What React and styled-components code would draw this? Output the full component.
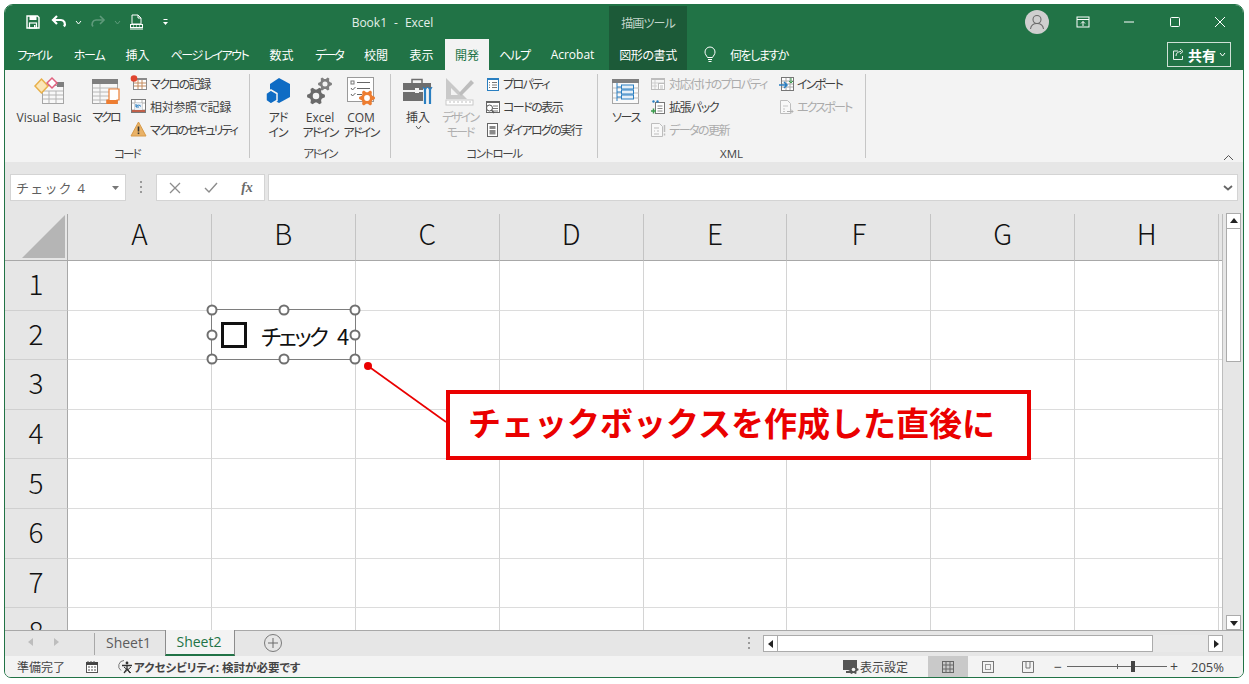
import React from "react";
import styled, { createGlobalStyle } from "styled-components";

const FONT = `"Open Sans","Noto Sans CJK JP",sans-serif`;
const GREEN = "#217346";
const DARK = "#1c5a38";
const RED = "#ea0000";

const Global = createGlobalStyle`
  html, body { margin: 0; background: #fff; }
  #root { width: 1249px; height: 684px; }
  * { box-sizing: border-box; }
  svg { flex: none; }
`;

const Page = styled.div`
  position: relative;
  width: 1249px;
  height: 684px;
  padding: 4px 5px 6px 4px;
  overflow: hidden;
  font-family: ${FONT};
  font-feature-settings: "palt";
  background: #fff;
`;
const Window = styled.div`
  height: 674px;
  display: flex;
  flex-direction: column;
  border: 1px solid ${GREEN};
  border-radius: 9px 9px 7px 7px;
  overflow: hidden;
  background: #f3f3f3;
`;
const Kana = styled.span`
  letter-spacing: ${(p) => p.$ls ?? -1.7}px;
`;

/* title bar */
const TitleBar = styled.div`
  height: 34px;
  display: flex;
  align-items: stretch;
  background: ${GREEN};
  color: #fff;
  flex: none;
  padding-left: 17px;
`;
const Slot = styled.div`
  width: ${(p) => p.$w}px;
  display: flex;
  align-items: center;
  justify-content: center;
  flex: none;
`;
const DocTitle = styled.div`
  width: 433px;
  flex: none;
  display: flex;
  align-items: center;
  justify-content: center;
  gap: 7px;
  font-size: 12px;
  color: #e4efe9;
`;
const ContextHead = styled.div`
  width: 78px;
  flex: none;
  margin-top: 1px;
  background: ${DARK};
  display: flex;
  align-items: center;
  justify-content: center;
  font-size: 12px;
  letter-spacing: -0.9px;
  color: #c2d5ca;
`;
const TitleRight = styled.div`
  flex: 1;
  display: flex;
  justify-content: flex-end;
  align-items: center;
`;
const Avatar = styled.div`
  width: 24px;
  height: 24px;
  border-radius: 50%;
  background: #cfcfcf;
  margin-right: 11px;
  display: flex;
  align-items: center;
  justify-content: center;
`;

/* tabs */
const TabBar = styled.div`
  height: 31px;
  flex: none;
  display: flex;
  background: ${GREEN};
  padding-right: 12px;
`;
const Tab = styled.div`
  width: ${(p) => p.$w}px;
  flex: none;
  display: flex;
  align-items: center;
  justify-content: center;
  font-size: 12px;
  letter-spacing: ${(p) => p.$ls || 0}px;
  color: ${(p) => (p.$active ? GREEN : "#fff")};
  background: ${(p) => (p.$active ? "#f3f3f3" : p.$context ? DARK : "transparent")};
  margin-left: ${(p) => p.$gap || 0}px;
`;
const Search = styled.div`
  display: flex;
  align-items: center;
  gap: 13px;
  margin-left: 16px;
  font-size: 12px;
  letter-spacing: -1.5px;
  color: #fff;
`;
const Share = styled.div`
  margin: 3px 0 3px auto;
  width: 64px;
  border: 1px solid #cfe0d6;
  display: flex;
  align-items: center;
  justify-content: center;
  gap: 3px;
  color: #fff;
  font-size: 14px;
  font-weight: 700;
`;

/* ribbon */
const Ribbon = styled.div`
  position: relative;
  height: 92px;
  flex: none;
  display: flex;
  background: #f3f3f3;
  color: #3f3f3f;
  font-size: 12px;
`;
const Group = styled.div`
  width: ${(p) => p.$w}px;
  flex: none;
  display: flex;
  flex-direction: column;
`;
const GroupBody = styled.div`
  height: 75px;
  display: flex;
  padding: 3px 0 0 ${(p) => p.$pad || 0}px;
`;
const GroupLabel = styled.div`
  height: 17px;
  line-height: 17px;
  text-align: center;
  font-size: 11.5px;
  letter-spacing: ${(p) => p.$ls ?? -1.4}px;
  color: #444;
`;
const Divider = styled.div`
  width: 1px;
  margin: 4px 0;
  flex: none;
  background: #c6c6c6;
`;
const Big = styled.div`
  width: ${(p) => p.$w}px;
  flex: none;
  display: flex;
  flex-direction: column;
  align-items: center;
  text-align: center;
  line-height: 15px;
  white-space: nowrap;
  color: ${(p) => (p.$off ? "#b0b0b0" : "#3f3f3f")};
`;
const BigIcon = styled.div`
  height: 36px;
  display: flex;
  align-items: center;
  justify-content: center;
  margin-bottom: 1px;
`;
const Small = styled.div`
  height: 23px;
  display: flex;
  align-items: center;
  gap: 3px;
  white-space: nowrap;
  letter-spacing: ${(p) => p.$ls ?? -1.5}px;
  color: ${(p) => (p.$off ? "#ababab" : "#3f3f3f")};
`;
const SmallCol = styled.div`
  width: ${(p) => p.$w}px;
  flex: none;
  margin-top: -1px;
  margin-left: ${(p) => p.$ml || 0}px;
`;
const Collapse = styled.div`
  position: absolute;
  right: 9px;
  bottom: 1px;
  line-height: 0;
`;

/* formula bar */
const FormulaBar = styled.div`
  height: 40px;
  flex: none;
  display: flex;
  align-items: flex-start;
  padding: 12px 5px 0 5px;
  background: #e6e6e6;
`;
const NameBox = styled.div`
  width: 116px;
  height: 27px;
  background: #fff;
  border: 1px solid #d4d4d4;
  display: flex;
  align-items: center;
  justify-content: space-between;
  padding: 0 6px 0 5px;
  font-size: 13px;
  letter-spacing: 1.2px;
  color: #5f5f5f;
  font-feature-settings: normal;
`;
const Grip = styled.div`
  width: 30px;
  height: 27px;
  flex: none;
  display: flex;
  align-items: center;
  justify-content: center;
`;
const FxBox = styled.div`
  width: 109px;
  height: 27px;
  flex: none;
  background: #fff;
  border: 1px solid #d4d4d4;
  display: grid;
  grid-template-columns: 36px 36px 36px;
  align-items: center;
  justify-items: center;
  color: #6a6a6a;
`;
const FxText = styled.span`
  font-family: "Liberation Serif", serif;
  font-style: italic;
  font-weight: 700;
  font-size: 14px;
`;
const FormulaInput = styled.div`
  flex: 1;
  height: 27px;
  margin-left: 3px;
  background: #fff;
  border: 1px solid #d4d4d4;
  display: flex;
  align-items: center;
  justify-content: flex-end;
  padding-right: 4px;
`;

/* sheet */
const SheetArea = styled.div`
  position: relative;
  height: 428px;
  flex: none;
  display: flex;
  background: #e6e6e6;
`;
const GridWrap = styled.div`
  width: 1218px;
  height: 416px;
  margin-top: 12px;
  overflow: hidden;
  background: #fff;
  border-right: 1px solid #bdbdbd;
  flex: none;
`;
const Grid = styled.div`
  display: grid;
  grid-template-columns: 63px repeat(8, 143.9px) 8px;
  grid-template-rows: 47px repeat(8, 49.6px);
`;
const Corner = styled.div`
  background: #e6e6e6;
  border-right: 1px solid #a8a8a8;
  border-bottom: 1px solid #a8a8a8;
  display: flex;
  align-items: flex-end;
  justify-content: flex-end;
  padding: 0 2px 2px 0;
`;
const ColHead = styled.div`
  background: #e6e6e6;
  border-right: 1px solid #c4c4c4;
  border-bottom: 1px solid #a8a8a8;
  display: flex;
  align-items: center;
  justify-content: center;
  padding-bottom: 8px;
  font-family: "Noto Sans CJK JP", sans-serif;
  font-size: 28px;
  font-weight: 300;
  color: #111;
`;
const RowHead = styled.div`
  background: #e6e6e6;
  border-right: 1px solid #a8a8a8;
  border-bottom: 1px solid #d0d0d0;
  display: flex;
  align-items: center;
  justify-content: center;
  padding-bottom: 4px;
  font-family: "Noto Sans CJK JP", sans-serif;
  font-size: 28px;
  font-weight: 300;
  color: #111;
`;
const Cell = styled.div`
  border-right: 1px solid #d4d4d4;
  border-bottom: 1px solid #dcdcdc;
`;

const Scrollbar = styled.div`
  width: 15px;
  margin: 11px 0 0 3px;
  flex: none;
  display: flex;
  flex-direction: column;
`;
const ScrollBtn = styled.div`
  width: 15px;
  height: ${(p) => p.$h || 15}px;
  flex: none;
  background: #fff;
  border: 1px solid #ababab;
  display: flex;
  align-items: center;
  justify-content: center;
`;
const VThumb = styled.div`
  height: 133px;
  background: #fff;
  border: 1px solid #ababab;
  border-top: 0;
  flex: none;
`;
const VTrack = styled.div`
  flex: 1;
  background: #e6e6e6;
`;

/* form control selection */
const Shape = styled.div`
  position: absolute;
  left: 206px;
  top: 107px;
  width: 145px;
  height: 51px;
  border: 1.5px solid #7e7e7e;
  background: #fff;
  display: flex;
  align-items: center;
  padding-left: 9px;
  gap: 14px;
`;
const Box = styled.div`
  width: 26px;
  height: 26px;
  border: 3px solid #111;
  flex: none;
`;
const ShapeLabel = styled.div`
  font-family: "Noto Sans CJK JP", sans-serif;
  font-size: 22px;
  line-height: 1;
  letter-spacing: -2.4px;
  word-spacing: 8px;
  color: #111;
  white-space: nowrap;
`;
const Handle = styled.div`
  position: absolute;
  left: ${(p) => p.$x}%;
  top: ${(p) => p.$y}%;
  width: 11px;
  height: 11px;
  border: 2px solid #707070;
  border-radius: 50%;
  background: #fff;
  transform: translate(-50%, -50%);
`;

/* sheet tabs row */
const SheetTabs = styled.div`
  height: 26px;
  flex: none;
  display: flex;
  align-items: stretch;
  background: #e6e6e6;
  border-top: 1px solid #a8a8a8;
`;
const Nav = styled.div`
  width: 89px;
  display: flex;
  align-items: center;
  justify-content: center;
  gap: 21px;
  padding: 0 12px 4px 0;
  flex: none;
`;
const SheetTab = styled.div`
  width: ${(p) => p.$w}px;
  flex: none;
  height: ${(p) => (p.$active ? 26 : 22)}px;
  margin-top: ${(p) => (p.$active ? -1 : 2)}px;
  font-size: 14px;
  display: flex;
  align-items: center;
  justify-content: center;
  padding: ${(p) => (p.$active ? "0 2px 2px 0" : "0 3px 4px 0")};
  color: ${(p) => (p.$active ? GREEN : "#5c5c5c")};
  background: ${(p) => (p.$active ? "#f3f3f3" : "transparent")};
  border-left: 1px solid ${(p) => (p.$active ? "#8c8c8c" : "#a8a8a8")};
  border-right: ${(p) => (p.$active ? "1px solid #8c8c8c" : "0")};
  border-bottom: ${(p) => (p.$active ? `2px solid ${GREEN}` : "0")};
`;
const AddSheet = styled.div`
  width: 18px;
  height: 18px;
  margin: 3px 0 0 29px;
  border-radius: 50%;
  border: 1px solid #7a7a7a;
  display: flex;
  align-items: center;
  justify-content: center;
  flex: none;
`;
const HBar = styled.div`
  margin: 4px 20px 0 auto;
  width: 475px;
  height: 17px;
  display: flex;
`;
const HThumb = styled.div`
  width: 375px;
  background: #fff;
  border: 1px solid #ababab;
  border-left: 0;
  flex: none;
`;
const HTrack = styled.div`
  flex: 1;
  background: #e9e9e9;
`;
const GripH = styled.div`
  width: 3px;
  margin: 2px 12px 0 0;
  line-height: 0;
  flex: none;
`;

/* status bar */
const StatusBar = styled.div`
  height: 21px;
  flex: none;
  display: flex;
  align-items: stretch;
  background: #f3f3f3;
  color: #444;
  font-size: 12px;
  padding-left: 12px;
`;
const StatusItem = styled.div`
  display: flex;
  align-items: ${(p) => (p.$fill ? "stretch" : "center")};
  margin-left: ${(p) => p.$ml || 0}px;
  gap: ${(p) => p.$gap || 0}px;
  font-weight: ${(p) => (p.$bold ? 700 : 400)};
  font-size: ${(p) => p.$size || 12}px;
  white-space: nowrap;
`;
const StatusRight = styled.div`
  margin-left: auto;
  display: flex;
  align-items: stretch;
  padding-right: 19px;
`;
const ViewBtn = styled.div`
  width: 40px;
  display: flex;
  align-items: center;
  justify-content: center;
  background: ${(p) => (p.$active ? "#c9c9c9" : "transparent")};
`;
const ZoomSlider = styled.div`
  position: relative;
  width: 100px;
  height: 1px;
  background: #666;
  margin: 10px 3px 0 5px;
`;
const ZoomTick = styled.div`
  position: absolute;
  left: 50px;
  top: -2px;
  width: 1px;
  height: 5px;
  background: #666;
`;
const ZoomThumb = styled.div`
  position: absolute;
  left: 64px;
  top: -5px;
  width: 4px;
  height: 11px;
  background: #444;
`;

/* annotation */
const Callout = styled.div`
  position: absolute;
  left: 446px;
  top: 390px;
  width: 585px;
  height: 70px;
  border: 4px solid ${RED};
  background: #fff;
  display: flex;
  align-items: center;
  padding: 0 0 6px 18px;
  color: ${RED};
  font-family: "Noto Sans CJK JP", sans-serif;
  font-feature-settings: normal;
  font-size: 33px;
  font-weight: 700;
  white-space: nowrap;
`;
const Leader = styled.svg`
  position: absolute;
  left: 360px;
  top: 358px;
`;

/* ---------- icons ---------- */
const gear = (cx, cy, r, teeth = 6) => {
  const pts = [];
  const n = teeth * 4;
  for (let i = 0; i < n; i++) {
    const a = ((i - 0.5) / n) * Math.PI * 2;
    const R = i % 4 < 2 ? r : r * 0.72;
    pts.push(`${(cx + R * Math.cos(a)).toFixed(1)},${(cy + R * Math.sin(a)).toFixed(1)}`);
  }
  return pts.join(" ");
};
const Gear = ({ cx, cy, r, fill, hole = "#f3f3f3" }) => (
  <>
    <polygon points={gear(cx, cy, r)} fill={fill} />
    <circle cx={cx} cy={cy} r={r * 0.36} fill={hole} />
  </>
);

const Svg = ({ w, h = w, children, ...rest }) => (
  <svg width={w} height={h} viewBox={`0 0 ${w} ${h}`} {...rest}>{children}</svg>
);

const SaveIcon = () => (
  <Svg w={16}>
    <path d="M2 2h10.5L14 3.5V14H2z" fill="none" stroke="#fff" strokeWidth="1.4" />
    <rect x="4.5" y="2" width="7" height="4" fill="#fff" />
    <rect x="4.5" y="9" width="7" height="5" fill="none" stroke="#fff" strokeWidth="1.2" />
    <rect x="9" y="11" width="1.5" height="2.5" fill="#fff" />
  </Svg>
);
const UndoIcon = ({ color = "#fff" }) => (
  <Svg w={16}>
    <path d="M6 2 2 6l4 4" fill="none" stroke={color} strokeWidth="2.2" />
    <path d="M2.5 6H10a4 4 0 0 1 3 6.5" fill="none" stroke={color} strokeWidth="2.2" />
  </Svg>
);
const RedoIcon = () => (
  <Svg w={16}>
    <path d="M10 2l4 4-4 4" fill="none" stroke="#5f9a7b" strokeWidth="1.6" />
    <path d="M13.5 6H6a4 4 0 0 0-3 6.5" fill="none" stroke="#5f9a7b" strokeWidth="1.6" />
  </Svg>
);
const Chev = ({ color = "#fff", w = 7, sw = 1 }) => (
  <Svg w={w} h={5}><path d={`M1 1l${w / 2 - 1} 3 ${w / 2 - 1}-3`} fill="none" stroke={color} strokeWidth={sw} /></Svg>
);
const NewDocIcon = () => (
  <Svg w={16}>
    <path d="M3 1h6l3 3v6H3zM9 1v3h3" fill="none" stroke="#fff" strokeWidth="1" />
    <rect x="1.5" y="10.5" width="12" height="3" fill="none" stroke="#fff" strokeWidth="1" />
    <path d="M4 12h1M7 12h1M10 12h1M1 15h13" stroke="#fff" strokeWidth="1" />
  </Svg>
);
const QatMore = () => (
  <Svg w={7} h={8}><path d="M1.5 1.5h4" stroke="#fff" /><path d="M1 4h5L3.5 7z" fill="#fff" /></Svg>
);
const RibbonDisplay = () => (
  <Svg w={14}>
    <rect x="1" y="2" width="12" height="10" fill="none" stroke="#fff" />
    <path d="M1 4.5h12" stroke="#fff" />
    <path d="M7 11V6.5M5 8.5l2-2 2 2" fill="none" stroke="#fff" />
  </Svg>
);
const MinIcon = () => <Svg w={12}><path d="M1 6h10" stroke="#fff" /></Svg>;
const MaxIcon = () => <Svg w={12}><rect x="1.5" y="1.5" width="9" height="9" rx="1" fill="none" stroke="#fff" /></Svg>;
const CloseIcon = () => <Svg w={12}><path d="M1 1l10 10M11 1 1 11" stroke="#fff" /></Svg>;
const PersonIcon = () => (
  <Svg w={16}>
    <circle cx="8" cy="5.5" r="4" fill="none" stroke="#6b6b6b" strokeWidth="1.1" />
    <path d="M1.5 15c.5-3.5 3-5.5 6.5-5.5s6 2 6.5 5.5" fill="none" stroke="#6b6b6b" strokeWidth="1.1" />
  </Svg>
);
const Bulb = () => (
  <Svg w={14} h={18}>
    <path d="M4.5 11.5C3.5 9.5 2 8.5 2 6a5 5 0 0 1 10 0c0 2.5-1.500 3.500-2.500 5.500z" fill="none" stroke="#fff" />
    <path d="M5 13.500h4M5.500 15.500h3" stroke="#fff" />
  </Svg>
);
const ShareIcon = () => (
  <Svg w={13}>
    <path d="M6 3H1.500v8.500h9V8" fill="none" stroke="#e8f0ec" />
    <path d="M4 8c0-3 2-4.500 5-4.500M8 1l3 2.500L8 6" fill="none" stroke="#e8f0ec" />
  </Svg>
);

const VbIcon = () => (
  <Svg w={33} h={30}>
    <rect x="9.500" y="9.500" width="21" height="18" fill="#f8f8f8" stroke="#a6a6a6" />
    <rect x="24" y="6" width="7" height="5" fill="#7f7f7f" />
    <path d="M10 15h20M10 19h20M10 23h20M16 15v12M23 15v12" stroke="#b4b4b4" />
    <polygon points="2,10 8.500,3 15,10 8.500,17" fill="#fbe6b8" stroke="#e8b04a" strokeWidth="1.5" />
    <polygon points="14,7 19,2 24,7 19,12" fill="#fff" stroke="#e0607e" strokeWidth="1.5" />
  </Svg>
);
const MacroIcon = () => (
  <Svg w={30} h={30}>
    <rect x="1.500" y="3.500" width="25" height="24" fill="#f7f7f7" stroke="#a6a6a6" />
    <rect x="1" y="3" width="26" height="5" fill="#7f7f7f" />
    <path d="M2 12h24M2 16h24M2 20h24M2 24h24M9 8v20" stroke="#b8b8b8" />
    <path d="M18 13h10v11h-2v3H16v-3h2z" fill="#fff" stroke="#ed7d31" strokeWidth="1.200" />
    <rect x="15.500" y="24" width="11" height="4" fill="#ed7d31" />
  </Svg>
);
const RecordIcon = () => (
  <Svg w={17}>
    <rect x="3.500" y="3.500" width="13" height="11" fill="#fff" stroke="#8a8a8a" />
    <rect x="3" y="3" width="14" height="2" fill="#8a8a8a" />
    <path d="M4 8h12M4 11h12M8 5v9M12 5v9" stroke="#c28a5c" />
    <circle cx="4" cy="3.500" r="3.300" fill="#e0452f" />
  </Svg>
);
const RelativeIcon = () => (
  <Svg w={17}>
    <rect x="1.500" y="1.500" width="14" height="13" fill="#fff" stroke="#7a7a7a" />
    <path d="M2 5h13M2 12h13M5 2v12M12 2v12" stroke="#b0b0b0" />
    <rect x="5" y="5" width="7" height="7" fill="#e9eef4" />
    <path d="M11 8.500a3 3 0 0 0-5 0M6 6v3h3" fill="none" stroke="#2a7fc1" />
    <rect x="2" y="12" width="13" height="2" fill="#c0604a" />
  </Svg>
);
const WarnIcon = () => (
  <Svg w={17}>
    <path d="M8.500 1 16 15H1z" fill="#e9b267" stroke="#d89a48" />
    <path d="M8.500 5.500v5" stroke="#333" strokeWidth="1.600" />
    <rect x="7.700" y="11.500" width="1.600" height="1.600" fill="#333" />
  </Svg>
);
const AddinIcon = () => (
  <Svg w={26} h={28}>
    <polygon points="14,1 25,7 25,20 14,26 5,21 5,7" fill="#0f6cc4" />
    <polygon points="6,13 12,16.500 12,23.500 6,27 1,23.500 1,16.500" fill="#0f6cc4" stroke="#f3f3f3" strokeWidth="1.500" />
  </Svg>
);
const ExcelAddinIcon = () => (
  <Svg w={28} h={30}>
    <Gear cx={19} cy={8} r={7} fill="#7f7f7f" />
    <Gear cx={10} cy={20} r={9} fill="#6a6a6a" />
  </Svg>
);
const ComAddinIcon = () => (
  <Svg w={32} h={30}>
    <rect x="2.500" y="1.500" width="26" height="24" fill="#fff" stroke="#9a9a9a" />
    <rect x="6" y="5" width="3" height="3" fill="none" stroke="#777" />
    <path d="M12 6.500h13M12 12.500h13M12 18.500h5M6 12l1.500 2 3-3M6 18l1.500 2 3-3" fill="none" stroke="#666" />
    <Gear cx={22} cy={22} r={8} fill="#ed7d31" hole="#fff" />
  </Svg>
);
const ToolboxIcon = () => (
  <Svg w={32} h={30}>
    <path d="M10 7V3.500h10V7" fill="none" stroke="#6e6e6e" strokeWidth="1.500" />
    <path d="M1 7h28v7H1z" fill="#6e6e6e" />
    <path d="M1 16h28v9H1z" fill="#6e6e6e" />
    <rect x="13" y="12" width="4" height="5" fill="#f3f3f3" />
    <path d="M25 12v16" stroke="#f3f3f3" strokeWidth="8" />
    <path d="M23 12v16M28 12v16" stroke="#2a7fc1" strokeWidth="2.200" />
    <path d="M21 11l2 3 2-3M26 11l2 3 2-3" fill="none" stroke="#2a7fc1" strokeWidth="1.300" />
  </Svg>
);
const DesignIcon = () => (
  <Svg w={32} h={32}>
    <path d="M2 3v21h21z" fill="#c9c9c9" />
    <path d="M7 13v7h7z" fill="#f3f3f3" />
    <path d="M15 18 27 5l3 3-13 13z" fill="#bdbdbd" />
    <rect x="2" y="25" width="27" height="5" fill="#fff" stroke="#c9c9c9" />
    <path d="M6 26v2M10 26v2M14 26v2M18 26v2M22 26v2M26 26v2" stroke="#c0c0c0" />
  </Svg>
);
const PropIcon = () => (
  <Svg w={16}>
    <rect x="3.500" y="2.500" width="11" height="12" fill="#fff" stroke="#2a7fc1" />
    <rect x="3" y="2" width="12" height="2" fill="#2a7fc1" />
    <path d="M5 6.500h1M8 6.500h5M5 9h1M8 9h5M5 11.500h1M8 11.500h5" stroke="#777" />
  </Svg>
);
const CodeIcon = () => (
  <Svg w={16}>
    <rect x="2.500" y="2.500" width="13" height="11" fill="#fff" stroke="#666" />
    <rect x="2" y="2" width="14" height="2" fill="#666" />
    <path d="M9 7h5M9 9.500h5M9 12h5" stroke="#777" />
    <circle cx="5.500" cy="9" r="3" fill="#fff" stroke="#555" />
    <path d="M7.500 11l2.500 3" stroke="#555" strokeWidth="1.300" />
  </Svg>
);
const DialogIcon = () => (
  <Svg w={16}>
    <rect x="3.500" y="1.500" width="10" height="13" fill="#fff" stroke="#666" />
    <rect x="5.500" y="4" width="6" height="3" fill="#8a8a8a" />
    <rect x="5.500" y="8" width="6" height="4.500" fill="#8a8a8a" />
  </Svg>
);
const SourceIcon = () => (
  <Svg w={30} h={30}>
    <rect x="1.500" y="3.500" width="26" height="24" fill="#fafafa" stroke="#a6a6a6" />
    <rect x="1" y="3" width="27" height="4" fill="#7f7f7f" />
    <path d="M2 12h26M2 17h26M2 22h26" stroke="#bcbcbc" />
    <path d="M6 7v18M6 11h5M6 16h5M6 21h5" stroke="#2a7fc1" fill="none" />
    <rect x="10.500" y="9" width="12" height="4" fill="#e6f0f8" stroke="#2a7fc1" />
    <rect x="10.500" y="14" width="12" height="4" fill="#e6f0f8" stroke="#2a7fc1" />
    <rect x="10.500" y="19" width="12" height="4" fill="#e6f0f8" stroke="#2a7fc1" />
  </Svg>
);
const MapPropIcon = () => (
  <Svg w={16}>
    <rect x="1.500" y="2.500" width="13" height="11" fill="#f6f6f6" stroke="#bdbdbd" />
    <rect x="1" y="2" width="14" height="2" fill="#bdbdbd" />
    <path d="M2 7h12M2 10h5M5 4v9" stroke="#cfcfcf" />
    <rect x="8.500" y="7.500" width="6" height="6" fill="#fff" stroke="#bdbdbd" />
    <path d="M10 10h3M10 12h3" stroke="#bdbdbd" />
  </Svg>
);
const PackIcon = () => (
  <Svg w={16}>
    <rect x="5.500" y="3.500" width="9" height="11" fill="#fff" stroke="#777" />
    <path d="M7.500 7h5M7.500 9.500h5M7.500 12h5" stroke="#888" />
    <circle cx="3.500" cy="2.500" r="1.200" fill="#2a7fc1" />
    <circle cx="7.500" cy="2.500" r="1.200" fill="#2a7fc1" />
    <path d="M3.500 9.500v5M1 12h5" stroke="#3a9a4a" strokeWidth="1.500" />
  </Svg>
);
const RefreshDocIcon = () => (
  <Svg w={16}>
    <path d="M1.500 1.500h8l3 3v10h-11z" fill="#f8f8f8" stroke="#bdbdbd" />
    <path d="M4 6h5M4 9h1M7 9h2M4 12h5" stroke="#bdbdbd" />
    <path d="M14.500 3v7M14.500 11.500v2" stroke="#bdbdbd" strokeWidth="1.500" />
  </Svg>
);
const ImportIcon = () => (
  <Svg w={16}>
    <rect x="3.500" y="1.500" width="12" height="13" fill="#fff" stroke="#777" />
    <path d="M4 5h11M4 8h11M4 11h11M8 2v12M12 2v12" stroke="#a8a8a8" />
    <path d="M1 9h8M6 6l3 3-3 3" fill="none" stroke="#2a7fc1" strokeWidth="1.500" />
    <path d="M13 2v5M11 5l2 2 2-2" fill="none" stroke="#3a9a4a" />
  </Svg>
);
const ExportIcon = () => (
  <Svg w={16}>
    <path d="M2.500 1.500h7l3 3v10h-10z" fill="#f8f8f8" stroke="#bdbdbd" />
    <path d="M5 7h5M5 10h2M5 12.500h2" stroke="#c6c6c6" />
    <path d="M9 12.500h6M13 10.500l2 2-2 2" fill="none" stroke="#b0b0b0" />
  </Svg>
);
const Tri = ({ dir, color = "#222" }) => {
  const map = { up: "0,6 4,1 8,6", down: "0,2 8,2 4,7", left: "6,0 6,8 1,4", right: "2,0 2,8 7,4" };
  return <Svg w={8} h={8}><polygon points={map[dir]} fill={color} /></Svg>;
};
const Dots = ({ color = "#9a9a9a" }) => (
  <Svg w={3} h={13}>
    <rect x="0" y="0" width="2" height="2" fill={color} />
    <rect x="0" y="5" width="2" height="2" fill={color} />
    <rect x="0" y="10" width="2" height="2" fill={color} />
  </Svg>
);
const CancelX = () => <Svg w={12}><path d="M1 1l10 10M11 1 1 11" stroke="#8c8c8c" strokeWidth="1.300" /></Svg>;
const Check = () => <Svg w={14} h={12}><path d="M1 6l4 4 8-9" fill="none" stroke="#8c8c8c" strokeWidth="1.400" /></Svg>;
const NavArrow = ({ dir }) => (
  <Svg w={5} h={8}><polygon points={dir === "l" ? "5,0 5,8 0,4" : "0,0 0,8 5,4"} fill="#bdbdbd" /></Svg>
);
const Plus = () => <Svg w={10}><path d="M5 0v10M0 5h10" stroke="#6a6a6a" /></Svg>;
const MacroStatus = () => (
  <Svg w={14}>
    <rect x="1.500" y="2.500" width="11" height="10" fill="#fff" stroke="#555" />
    <rect x="1" y="2" width="12" height="3" fill="#444" />
    <path d="M3 1v2M6 1v2M9 1v2M3 7h2M6 7h2M9 7h2M3 10h2M6 10h2M9 10h2" stroke="#555" />
  </Svg>
);
const A11yIcon = () => (
  <Svg w={17}>
    <path d="M8 2.500A5.500 5.500 0 0 0 5 12.500" fill="none" stroke="#777" />
    <circle cx="11" cy="5" r="1.400" fill="#333" />
    <path d="M6 7.500h10M11 8v2.500L8 15M11 10.500l3 4.500" fill="none" stroke="#333" strokeWidth="1.300" />
    <path d="M8 9l7 6M15 9l-7 6" stroke="#333" />
  </Svg>
);
const DisplaySet = () => (
  <Svg w={16}>
    <rect x="0" y="1" width="14" height="10" fill="#555" />
    <path d="M3 13h5" stroke="#555" strokeWidth="2" />
    <Gear cx={10.500} cy={10.500} r={5} fill="#555" hole="#f3f3f3" />
  </Svg>
);
const NormalView = () => (
  <Svg w={14}>
    <rect x="1.500" y="1.500" width="11" height="11" fill="none" stroke="#666" />
    <path d="M5 2v10M9 2v10M2 5h10M2 9h10" stroke="#666" />
  </Svg>
);
const LayoutView = () => (
  <Svg w={14}>
    <rect x="1.500" y="1.500" width="11" height="11" fill="none" stroke="#777" />
    <rect x="4.500" y="4.500" width="5" height="5" fill="none" stroke="#999" />
  </Svg>
);
const BreakView = () => (
  <Svg w={14}>
    <path d="M1.500 1.500h11v11h-11zM5 2v6h4V2" fill="none" stroke="#777" />
  </Svg>
);

const COLS = ["A", "B", "C", "D", "E", "F", "G", "H"];
const ROWS = [1, 2, 3, 4, 5, 6, 7, 8];
const HANDLES = [[0, 0], [50, 0], [100, 0], [0, 50], [100, 50], [0, 100], [50, 100], [100, 100]];
const MAIN_TABS = [
  ["ファイル", 58, -2], ["ホーム", 52, -1.2], ["挿入", 45, 0], ["ページ レイアウト", 99, -1.5], ["数式", 45, 0],
  ["データ", 50, -2], ["校閲", 44, 0], ["表示", 47, 0],
];

export default function App() {
  return (
    <Page>
      <Global />
      <Window>
        <TitleBar>
          <Slot $w={22}><SaveIcon /></Slot>
          <Slot $w={30}><UndoIcon /></Slot>
          <Slot $w={8}><Chev /></Slot>
          <Slot $w={32}><RedoIcon /></Slot>
          <Slot $w={6}><Chev color="#5f9a7b" /></Slot>
          <Slot $w={34}><NewDocIcon /></Slot>
          <Slot $w={22}><QatMore /></Slot>
          <DocTitle><span>Book1</span><span>-</span><span>Excel</span></DocTitle>
          <ContextHead>描画ツール</ContextHead>
          <TitleRight>
            <Avatar><PersonIcon /></Avatar>
            <Slot $w={46}><RibbonDisplay /></Slot>
            <Slot $w={46}><MinIcon /></Slot>
            <Slot $w={45}><MaxIcon /></Slot>
            <Slot $w={46}><CloseIcon /></Slot>
          </TitleRight>
        </TitleBar>

        <TabBar>
          {MAIN_TABS.map(([t, w, ls]) => <Tab key={t} $w={w} $ls={ls}>{t}</Tab>)}
          <Tab $w={44} $active>開発</Tab>
          <Tab $w={51} $ls={-1.3}>ヘルプ</Tab>
          <Tab $w={65}>Acrobat</Tab>
          <Tab $w={78} $context $gap={4} $ls={-0.4}>図形の書式</Tab>
          <Search><Bulb />何をしますか</Search>
          <Share><ShareIcon />共有<Chev w={7} /></Share>
        </TabBar>

        <Ribbon>
          <Group $w={244}>
            <GroupBody>
              <Big $w={88}><BigIcon><VbIcon /></BigIcon>Visual Basic</Big>
              <Big $w={26}><BigIcon><MacroIcon /></BigIcon><Kana $ls={-2}>マクロ</Kana></Big>
              <SmallCol $w={120} $ml={11}>
                <Small><RecordIcon />マクロの記録</Small>
                <Small $ls={-0.3}><RelativeIcon />相対参照で記録</Small>
                <Small $ls={-2}><WarnIcon />マクロのセキュリティ</Small>
              </SmallCol>
            </GroupBody>
            <GroupLabel $ls={-1.8}>コード</GroupLabel>
          </Group>
          <Divider />
          <Group $w={140}>
            <GroupBody $pad={7}>
              <Big $w={42}><BigIcon><AddinIcon /></BigIcon><Kana $ls={-1}>アド<br />イン</Kana></Big>
              <Big $w={42}><BigIcon><ExcelAddinIcon /></BigIcon>Excel<br /><Kana>アドイン</Kana></Big>
              <Big $w={40}><BigIcon><ComAddinIcon /></BigIcon>COM<br /><Kana>アドイン</Kana></Big>
            </GroupBody>
            <GroupLabel $ls={-1.7}>アドイン</GroupLabel>
          </Group>
          <Divider />
          <Group $w={206}>
            <GroupBody $pad={8}>
              <Big $w={38}><BigIcon><ToolboxIcon /></BigIcon>挿入<Chev color="#555" /></Big>
              <Big $w={46} $off><BigIcon><DesignIcon /></BigIcon><Kana $ls={-2}>デザイン<br />モード</Kana></Big>
              <SmallCol $w={110} $ml={1}>
                <Small><PropIcon />プロパティ</Small>
                <Small><CodeIcon />コードの表示</Small>
                <Small $ls={-1.6}><DialogIcon />ダイアログの実行</Small>
              </SmallCol>
            </GroupBody>
            <GroupLabel $ls={-1.3}>コントロール</GroupLabel>
          </Group>
          <Divider />
          <Group $w={267}>
            <GroupBody $pad={8}>
              <Big $w={40}><BigIcon><SourceIcon /></BigIcon><Kana $ls={-1.3}>ソース</Kana></Big>
              <SmallCol $w={128} $ml={4}>
                <Small $off><MapPropIcon />対応付けのプロパティ</Small>
                <Small $ls={-1.2}><PackIcon />拡張パック</Small>
                <Small $off><RefreshDocIcon />データの更新</Small>
              </SmallCol>
              <SmallCol $w={80}>
                <Small $ls={-1.8}><ImportIcon />インポート</Small>
                <Small $off $ls={-1.8}><ExportIcon />エクスポート</Small>
              </SmallCol>
            </GroupBody>
            <GroupLabel $ls={0}>XML</GroupLabel>
          </Group>
          <Divider />
          <Collapse>
            <Svg w={11} h={7}><path d="M1 6l4.500-4.500L10 6" fill="none" stroke="#555" /></Svg>
          </Collapse>
        </Ribbon>

        <FormulaBar>
          <NameBox><span>チェック 4</span><Svg w={7} h={4}><path d="M0 0h7L3.500 4z" fill="#777" /></Svg></NameBox>
          <Grip><Dots /></Grip>
          <FxBox><CancelX /><Check /><FxText>fx</FxText></FxBox>
          <FormulaInput><Svg w={10} h={6}><path d="M1 1l4 3.500L9 1" fill="none" stroke="#666" strokeWidth="1.800" /></Svg></FormulaInput>
        </FormulaBar>

        <SheetArea>
          <GridWrap>
            <Grid>
              <Corner><Svg w={43} h={43}><polygon points="43,0 43,43 0,43" fill="#b5b5b5" /></Svg></Corner>
              {COLS.map((c) => <ColHead key={c}>{c}</ColHead>)}
              <ColHead />
              {ROWS.map((r) => (
                <React.Fragment key={r}>
                  <RowHead>{r}</RowHead>
                  {COLS.map((c) => <Cell key={c} />)}
                  <Cell />
                </React.Fragment>
              ))}
            </Grid>
          </GridWrap>
          <Scrollbar>
            <ScrollBtn $h={16}><Tri dir="up" /></ScrollBtn>
            <VThumb />
            <VTrack />
            <ScrollBtn><Tri dir="down" /></ScrollBtn>
          </Scrollbar>
          <Shape>
            <Box />
            <ShapeLabel>チェック 4</ShapeLabel>
            {HANDLES.map(([x, y]) => <Handle key={`${x}-${y}`} $x={x} $y={y} />)}
          </Shape>
        </SheetArea>

        <SheetTabs>
          <Nav><NavArrow dir="l" /><NavArrow dir="r" /></Nav>
          <SheetTab $w={71}>Sheet1</SheetTab>
          <SheetTab $w={70} $active>Sheet2</SheetTab>
          <AddSheet><Plus /></AddSheet>
          <HBar>
            <GripH><Dots /></GripH>
            <ScrollBtn $h={17}><Tri dir="left" /></ScrollBtn>
            <HThumb />
            <HTrack />
            <ScrollBtn $h={17}><Tri dir="right" /></ScrollBtn>
          </HBar>
        </SheetTabs>

        <StatusBar>
          <StatusItem>準備完了</StatusItem>
          <StatusItem $ml={20}><MacroStatus /></StatusItem>
          <StatusItem $ml={17} $gap={1} $bold $size={11.5}><A11yIcon />アクセシビリティ: 検討が必要です</StatusItem>
          <StatusRight>
            <StatusItem $gap={1}><DisplaySet />表示設定</StatusItem>
            <StatusItem $ml={20} $fill>
              <ViewBtn $active><NormalView /></ViewBtn>
              <ViewBtn><LayoutView /></ViewBtn>
              <ViewBtn><BreakView /></ViewBtn>
            </StatusItem>
            <StatusItem $ml={6} $size={14}>−</StatusItem>
            <ZoomSlider><ZoomTick /><ZoomThumb /></ZoomSlider>
            <StatusItem $size={14}>+</StatusItem>
            <StatusItem $ml={13} $size={13}>205%</StatusItem>
          </StatusRight>
        </StatusBar>
      </Window>

      <Leader width="90" height="70" viewBox="0 0 90 70">
        <circle cx="8" cy="8" r="4" fill={RED} />
        <path d="M8 8 86 64" stroke={RED} strokeWidth="1.600" />
      </Leader>
      <Callout>チェックボックスを作成した直後に</Callout>
    </Page>
  );
}
